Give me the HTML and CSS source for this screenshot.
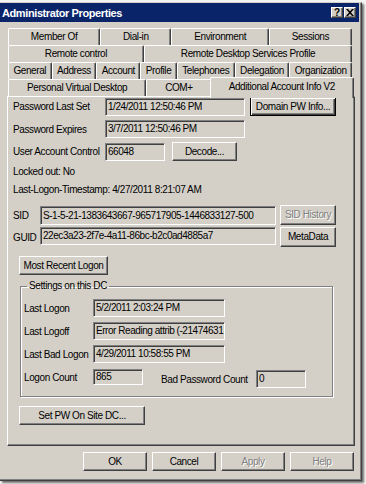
FILE: index.html
```html
<!DOCTYPE html>
<html>
<head>
<meta charset="utf-8">
<link rel="stylesheet" href="styles.css">
</head>
<body>
<div class="window">
  <div class="titlebar">
    <span class="title">Administrator Properties</span>
    <span class="tbtns">
      <span class="tbtn">?</span>
      <span class="tbtn"><svg width="8" height="7" viewBox="0 0 8 7"><path d="M0 0h2l2 2.2L6 0h2L5 3.5 8 7H6L4 4.8 2 7H0l3-3.5z" fill="#000"/></svg></span>
    </span>
  </div>
  <div class="content">
    <div class="tabs">
      <div class="tabrow">
        <div class="tab">Member Of</div>
        <div class="tab">Dial-in</div>
        <div class="tab">Environment</div>
        <div class="tab">Sessions</div>
      </div>
      <div class="tabrow">
        <div class="tab">Remote control</div>
        <div class="tab">Remote Desktop Services Profile</div>
      </div>
      <div class="tabrow">
        <div class="tab">General</div>
        <div class="tab">Address</div>
        <div class="tab">Account</div>
        <div class="tab">Profile</div>
        <div class="tab">Telephones</div>
        <div class="tab">Delegation</div>
        <div class="tab">Organization</div>
      </div>
      <div class="tabrow front">
        <div class="tab">Personal Virtual Desktop</div>
        <div class="tab">COM+</div>
        <div class="tab sel">Additional Account Info V2</div>
      </div>
    </div>
    <div class="panel">
      <div class="row r-a">
        <span class="lbl">Password Last Set</span>
        <span class="field w140">1/24/2011 12:50:46 PM</span>
        <span class="btn default w86">Domain PW Info...</span>
      </div>
      <div class="row r-b">
        <span class="lbl">Password Expires</span>
        <span class="field w140">3/7/2011 12:50:46 PM</span>
      </div>
      <div class="row r-c">
        <span class="lbl">User Account Control</span>
        <span class="field w60">66048</span>
        <span class="btn w65 decode">Decode...</span>
      </div>
      <div class="line l-locked">Locked out: No</div>
      <div class="line l-ts">Last-Logon-Timestamp: 4/27/2011 8:21:07 AM</div>
      <div class="row r-sid">
        <span class="lbl short">SID</span>
        <span class="field w236 h19">S-1-5-21-1383643667-965717905-1446833127-500</span>
        <span class="btn disabled w56 h20">SID History</span>
      </div>
      <div class="row r-guid">
        <span class="lbl short">GUID</span>
        <span class="field w236">22ec3a23-2f7e-4a11-86bc-b2c0ad4885a7</span>
        <span class="btn w56 h20">MetaData</span>
      </div>
      <span class="btn w89 mrl">Most Recent Logon</span>
      <fieldset class="group">
        <legend>Settings on this DC</legend>
        <div class="grow">
          <span class="glbl">Last Logon</span>
          <span class="field w132">5/2/2011 2:03:24 PM</span>
        </div>
        <div class="grow">
          <span class="glbl">Last Logoff</span>
          <span class="field w132">Error Reading attrib (-21474631</span>
        </div>
        <div class="grow">
          <span class="glbl">Last Bad Logon</span>
          <span class="field w132">4/29/2011 10:58:55 PM</span>
        </div>
        <div class="grow">
          <span class="glbl">Logon Count</span>
          <span class="field w50 h16">865</span>
          <span class="bplbl">Bad Password Count</span>
          <span class="field w50 bpf">0</span>
        </div>
      </fieldset>
      <span class="btn w126 setpw">Set PW On Site DC...</span>
    </div>
    <div class="footer">
      <span class="btn w64">OK</span>
      <span class="btn w64">Cancel</span>
      <span class="btn w64 disabled">Apply</span>
      <span class="btn w64 disabled">Help</span>
    </div>
  </div>
</div>
</body>
</html>
```
FILE: styles.css
```css
html, body {
  margin: 0;
  padding: 0;
  background: #f4f4f2;
}
body {
  font-family: "Liberation Sans", Arial, sans-serif;
  font-size: 10px;
  letter-spacing: -0.4px;
  color: #000;
  width: 366px;
  height: 484px;
  overflow: hidden;
}
.window {
  margin-top: 2px;
  width: 362px;
  height: 479px;
  box-sizing: border-box;
  background: #d4d0c8;
  border-top: 1px solid #d4d0c8;
  border-right: 1px solid #404040;
  border-bottom: 1px solid #404040;
  box-shadow: inset -1px -1px #808080, 2px 2px 2px rgba(0,0,0,0.55);
}
.titlebar {
  height: 19px;
  margin-right: 2px;
  background: #0a246a;
  display: flex;
  align-items: center;
  justify-content: space-between;
}
.title {
  color: #fff;
  font-weight: bold;
  font-size: 11px;
  padding-left: 2px;
}
.tbtns {
  display: flex;
  gap: 1px;
  padding-right: 3px;
}
.tbtn {
  width: 12px;
  height: 11px;
  box-sizing: border-box;
  background: #d4d0c8;
  border: 1px solid;
  border-color: #fff #404040 #404040 #fff;
  box-shadow: inset -1px -1px #808080;
  display: flex;
  align-items: center;
  justify-content: center;
  font-weight: bold;
  font-size: 10px;
  line-height: 9px;
  letter-spacing: 0;
}
.content {
  padding: 6px 6px 0 7px;
}
.tabs {
  padding: 0 3px 0 1px;
}
.tabrow {
  display: flex;
  height: 17px;
}
.tab {
  flex: 1 1 auto;
  box-sizing: border-box;
  height: 17px;
  text-align: center;
  white-space: nowrap;
  line-height: 16px;
  border-top: 1px solid #fff;
  border-left: 1px solid #fff;
  border-right: 1px solid #404040;
  border-radius: 2px 2px 0 0;
  box-shadow: inset -1px 0 #808080;
  background: #d4d0c8;
}
.tab.sel {
  height: 21px;
  margin: -2px -2px 0 -2px;
  line-height: 18px;
  position: relative;
  z-index: 1;
}
.panel {
  box-sizing: border-box;
  height: 350px;
  border: 1px solid;
  border-color: #fff #404040 #404040 #fff;
  box-shadow: inset -1px -1px #808080;
  padding: 0 0 0 5px;
  display: flex;
  flex-direction: column;
  align-items: flex-start;
}
.row {
  display: flex;
  align-items: center;
  height: 19px;
}
.r-b { margin-top: 4px; height: 18px; }
.r-c { margin-top: 4px; }
.r-sid { margin-top: 8px; height: 20px; }
.r-guid { margin-top: 2px; height: 20px; align-items: flex-start; }
.lbl {
  width: 92px;
  white-space: nowrap;
}
.lbl.short {
  width: 27px;
  align-self: center;
}
.line {
  height: 14px;
  line-height: 14px;
  margin-top: 4px;
  white-space: nowrap;
}
.field {
  box-sizing: border-box;
  height: 18px;
  line-height: 16px;
  padding-left: 2px;
  letter-spacing: -0.45px;
  white-space: nowrap;
  overflow: hidden;
  border: 1px solid;
  border-color: #808080 #fff #fff #808080;
  box-shadow: inset 1px 1px #404040;
  background: #d4d0c8;
}
.field.h19 { height: 19px; line-height: 17px; }
.field.h16 { height: 16px; line-height: 14px; }
.btn {
  box-sizing: border-box;
  height: 19px;
  line-height: 17px;
  text-align: center;
  white-space: nowrap;
  border: 1px solid;
  border-color: #fff #404040 #404040 #fff;
  box-shadow: inset -1px -1px #808080;
  background: #d4d0c8;
}
.btn.h20 { height: 20px; line-height: 18px; }
.btn.default {
  border-color: #000;
  box-shadow: inset 1px 1px #fff, inset -1px -1px #404040, inset -2px -2px #808080;
}
.btn.disabled {
  color: #808080;
  text-shadow: 1px 1px #fff;
}
.w140 { width: 140px; }
.w86 { width: 86px; margin-left: 5px; }
.w60 { width: 60px; }
.w65 { width: 65px; }
.decode { margin-left: 7px; }
.w236 { width: 236px; }
.w56 { width: 56px; margin-left: 4px; }
.w89 { width: 89px; }
.w132 { width: 132px; }
.w50 { width: 50px; }
.w126 { width: 126px; }
.w64 { width: 64px; }
.mrl { margin-top: 9px; margin-left: 6px; }
.group {
  margin: 4px 0 0 7px;
  width: 313px;
  box-sizing: border-box;
  padding: 6px 0 10px 3px;
  border: 1px solid #808080;
  box-shadow: inset 1px 1px #fff, 1px 1px #fff;
  display: flex;
  flex-direction: column;
  gap: 5px;
  min-width: 0;
}
.group legend {
  padding: 0 2px;
  margin-left: 3px;
  line-height: 14px;
}
.grow {
  display: flex;
  align-items: center;
  height: 18px;
}
.glbl {
  width: 69px;
  white-space: nowrap;
}
.bplbl {
  margin-left: 18px;
  width: 95px;
  white-space: nowrap;
  margin-top: 4px;
}
.bpf {
  margin-top: 4px;
}
.setpw {
  margin-top: 9px;
  margin-left: 6px;
}
.footer {
  display: flex;
  justify-content: flex-end;
  gap: 5px;
  margin-top: 6px;
  padding-right: 1px;
}
```
